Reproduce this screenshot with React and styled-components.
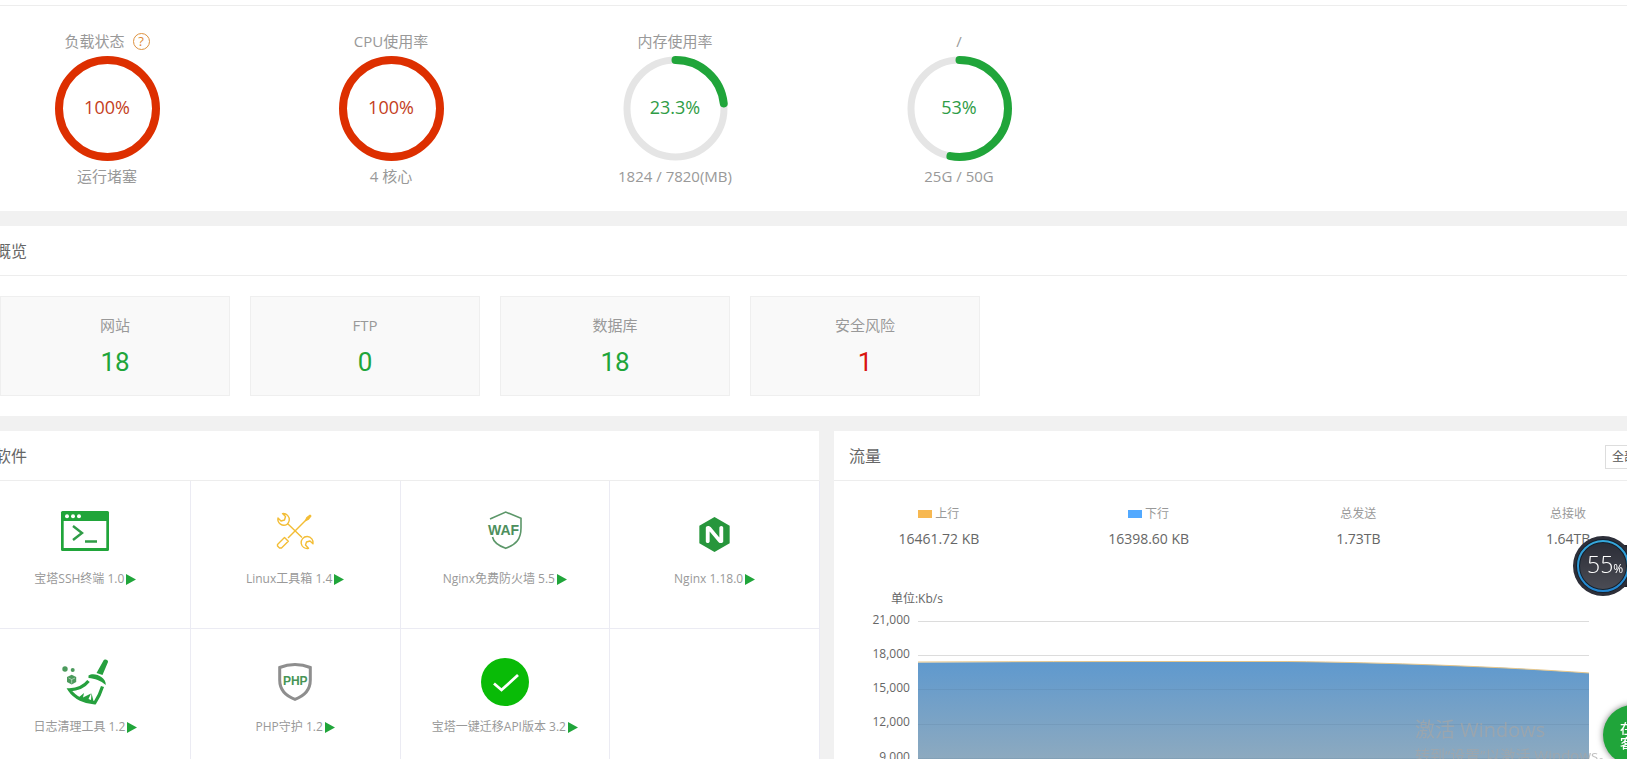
import React from 'react';
import styled, { createGlobalStyle, ThemeProvider } from 'styled-components';
import { SiNginx } from 'react-icons/si';

const theme = {
  green: '#20a53a',
  red: '#dd2f00',
  danger: '#d9150f',
  muted: '#999',
  text: '#666',
  line: '#ededed',
  page: '#f1f1f1',
  gap: '15px',
};

const GlobalStyle = createGlobalStyle`
  * {
    box-sizing: border-box;
  }
  body {
    margin: 0;
    background: ${theme.page};
    color: ${theme.text};
    font-family: "Open Sans", "Noto Sans CJK SC", sans-serif;
    font-size: 12px;
  }
  a {
    color: inherit;
    text-decoration: none;
  }
`;

const Viewport = styled.div`
  height: 100vh;
  overflow: hidden;
`;

// the dashboard is wider than the window and scrolled a little to the right
const Page = styled.main`
  display: flex;
  flex-direction: column;
  gap: ${props => props.theme.gap};
  width: calc(100% + 66px);
  margin-left: -20px;
`;

const Panel = styled.section`
  min-width: 0;
  background: #fff;
`;

const PanelHeader = styled.header`
  display: flex;
  align-items: center;
  justify-content: space-between;
  height: 50px;
  padding: 0 15px;
  border-bottom: 1px solid ${props => props.theme.line};
`;

const Title = styled.h2`
  margin: 0;
  font-size: 16px;
  font-weight: 400;
  line-height: 24px;
`;

const TopEdge = styled.div`
  height: 6px;
  border-bottom: 1px solid ${props => props.theme.line};
`;

const GaugeList = styled.ul`
  display: grid;
  grid-template-columns: repeat(4, 284px);
  margin: 0 0 0 -15px;
  padding: 20px 0;
  list-style: none;
`;

const GaugeItem = styled.li`
  display: flex;
  flex-direction: column;
  align-items: center;
  color: ${props => props.theme.muted};
  font-size: 15px;
  line-height: 30px;
`;

const GaugeLabel = styled.div`
  display: flex;
  align-items: center;
  gap: 8px;
  height: 30px;
`;

const Dial = styled.div`
  display: grid;
  place-items: center;
  height: 105px;
  > * {
    grid-area: 1 / 1;
  }
`;

const DialValue = styled.span`
  color: ${props => props.color};
  font-size: 18px;
  line-height: 24px;
  padding-bottom: 4px;
`;

const HelpButton = styled.button`
  width: 17px;
  height: 17px;
  padding: 0;
  border: 1px solid #dd9240;
  border-radius: 50%;
  background: none;
  color: #dd8a35;
  font: 13px/15px "Open Sans", sans-serif;
`;

const CardList = styled.div`
  display: flex;
  gap: 20px;
  padding: 20px;
`;

const Card = styled.a`
  display: block;
  width: 230px;
  height: 100px;
  padding: 13px 0;
  border: 1px solid #efefef;
  background: #f9f9f9;
  text-align: center;
`;

const CardLabel = styled.div`
  color: ${props => props.theme.muted};
  font-size: 15px;
  line-height: 30px;
`;

const CardValue = styled.div`
  color: ${props => (props.$danger ? props.theme.danger : props.theme.green)};
  font-family: Roboto, sans-serif;
  font-size: 26px;
  line-height: 44px;
`;

const Columns = styled.div`
  display: grid;
  grid-template-columns: 1fr 1fr;
  gap: ${props => props.theme.gap};
`;

const AppGrid = styled.div`
  display: grid;
  grid-template-columns: repeat(4, 1fr);
  margin-right: -1px;
  padding-left: 1px;
`;

const AppCell = styled.a`
  display: flex;
  flex-direction: column;
  align-items: center;
  height: 148px;
  padding-top: 29px;
  border-right: 1px solid #ebebf3;
  border-bottom: 1px solid #ebebf3;
  color: ${props => props.theme.muted};
`;

const AppIcon = styled.svg`
  width: 48px;
  height: 48px;
  overflow: visible;
`;

const AppIconBox = styled.div`
  display: grid;
  place-items: center;
  height: 48px;
`;

const AppName = styled.span`
  display: flex;
  align-items: center;
  gap: 2px;
  line-height: 20px;
  margin-top: 11px;
`;

const Filter = styled.select`
  appearance: none;
  width: 53px;
  height: 24px;
  margin-top: 2px;
  padding: 0 6px;
  border: 1px solid #ddd;
  border-radius: 0;
  background: #fff;
  color: #555;
  font: inherit;
`;

const Stats = styled.dl`
  display: grid;
  grid-template-columns: repeat(4, 1fr);
  margin: 0;
  padding-top: 20px;
  text-align: center;
  line-height: 25px;
`;

const StatLabel = styled.dt`
  display: flex;
  align-items: center;
  justify-content: center;
  gap: 3px;
  color: ${props => props.theme.muted};
`;

const StatValue = styled.dd`
  margin: 0;
  font-size: 14px;
`;

const Swatch = styled.i`
  width: 14px;
  height: 8px;
  background: ${props => props.color};
`;

const ChartUnit = styled.div`
  margin: 38px 0 1px calc(10% - 27px);
  line-height: 20px;
`;

const Chart = styled.div`
  display: grid;
  grid-template-columns: 10% 1fr 10%;
`;

const Axis = styled.div`
  display: flex;
  flex-direction: column;
  justify-content: space-between;
  height: 259px;
  padding-right: 8px;
  line-height: 20px;
  text-align: right;
`;

const Plot = styled.svg`
  display: block;
  width: 100%;
  height: 240px;
  margin-top: 11px;
`;

const MemoryBall = styled.div`
  position: fixed;
  top: 536px;
  right: -6px;
  width: 60px;
  height: 60px;
`;

const BallText = styled.div`
  position: absolute;
  top: 12px;
  left: 14px;
  color: #fff;
  font: 300 23px/32px "Open Sans", sans-serif;
  white-space: nowrap;
  small {
    font-size: 12px;
    font-weight: 400;
  }
`;

const Support = styled.button`
  position: fixed;
  top: 705px;
  right: -36px;
  width: 60px;
  height: 60px;
  padding: 0 17px;
  border: 0;
  border-radius: 50%;
  background: ${props => props.theme.green};
  box-shadow: 0 0 6px rgba(0, 0, 0, .5);
  color: #fff;
  font: 500 13px/15px "Noto Sans CJK SC", sans-serif;
`;

const Watermark = styled.div`
  position: fixed;
  top: 715px;
  left: calc(100% - 212px);
  color: rgba(165, 165, 165, .7);
  font-size: 15px;
  line-height: 20px;
  white-space: nowrap;
  pointer-events: none;
  strong {
    display: block;
    font-size: 20px;
    font-weight: 400;
    line-height: 30px;
  }
`;

const gauges = [
  { label: '负载状态', value: 100, note: '运行堵塞', help: true },
  { label: 'CPU使用率', value: 100, note: '4 核心' },
  { label: '内存使用率', value: 23.3, note: '1824 / 7820(MB)' },
  { label: '/', value: 53, note: '25G / 50G' },
];

const cards = [
  { label: '网站', value: 18 },
  { label: 'FTP', value: 0 },
  { label: '数据库', value: 18 },
  { label: '安全风险', value: 1, danger: true },
];

const stats = [
  { label: '上行', value: '16461.72 KB', color: '#f7b851' },
  { label: '下行', value: '16398.60 KB', color: '#52a9ff' },
  { label: '总发送', value: '1.73TB' },
  { label: '总接收', value: '1.64TB' },
];

const ticks = ['21,000', '18,000', '15,000', '12,000', '9,000', '6,000', '3,000', '0'];

const Gauge = ({ label, value, note, help }) => {
  const full = value >= 100;
  const color = full ? theme.red : theme.green;
  return (
    <GaugeItem>
      <GaugeLabel>
        {label}
        {help && <HelpButton type="button">?</HelpButton>}
      </GaugeLabel>
      <Dial>
        <svg width="105" height="105" fill="none">
          <circle cx="52.5" cy="52.5" r="48.5" stroke="#e5e5e5" strokeWidth="7" />
          <circle
            cx="52.5"
            cy="52.5"
            r="48.5"
            stroke={color}
            strokeWidth="8"
            strokeLinecap={full ? 'butt' : 'round'}
            pathLength="100"
            strokeDasharray={full ? 'none' : `${value} 100`}
            transform="rotate(-90 52.5 52.5)"
          />
        </svg>
        <DialValue color={full ? '#c43e1c' : '#2f9c46'}>{value}%</DialValue>
      </Dial>
      {note}
    </GaugeItem>
  );
};

const TerminalIcon = () => (
  <AppIcon viewBox="0 0 48 48">
    <rect y="1" width="48" height="40" rx="1.5" fill="#20a53a" />
    <path d="M2.7 11H45.3V38H2.7Z" fill="#fff" />
    <g fill="#fff">
      <circle cx="6" cy="6.3" r="2" />
      <circle cx="12" cy="6.3" r="2" />
      <circle cx="18" cy="6.3" r="2" />
    </g>
    <path d="M12 16L21 23L12 30M24 31.5H36" fill="none" stroke="#2f9c46" strokeWidth="2.4" />
  </AppIcon>
);

const ToolsIcon = () => (
  <AppIcon viewBox="0 0 48 48" fill="none" stroke="#f3bd35" strokeWidth="1.4" strokeLinejoin="round">
    <path d="M17 14L31 27.500M18.200 10.500A6 6 0 0 0 11.500 3.600L14.500 6.500L13.500 10L10 11L7 8A6 6 0 0 0 16 14.300A6 6 0 0 0 18.200 10.500Z" />
    <path d="M30.200 33.500A6 6 0 0 0 37.500 38.300L34.500 35L35.500 32L39 31L42 33.800A6 6 0 1 0 30.200 33.500Z" />
    <path d="M17 28L35 10" />
    <path d="M34.500 10.500L36 7.500L39 5.200L39.800 6L37.500 9L34.500 10.500Z" fill="#f3bd35" />
    <path d="M13.500 27.500L17.300 31.300L10.500 38H8.500L6.500 36V34.500Z" />
  </AppIcon>
);

const WafIcon = () => (
  <AppIcon viewBox="0 0 48 48">
    <path d="M9 9L24.700 2L40 8.300V18C40 29 35.500 34 24.700 38.300C17 35.500 12.500 32 11.500 27" fill="none" stroke="#5c9769" strokeWidth="1.6" />
    <text x="22.500" y="25" textAnchor="middle" fontFamily="Liberation Sans, sans-serif" fontWeight="700" fontSize="14" fill="#4d8f5d">WAF</text>
  </AppIcon>
);

const BroomIcon = () => (
  <AppIcon viewBox="0 0 48 48">
    <g fill="#4b9a5c">
      <circle cx="4" cy="11" r="2.700" />
      <circle cx="11.700" cy="12" r="2" />
      <path d="M10.700 16.800L15.200 19V24L10.700 26.500L6 24V19Z" />
    </g>
    <path d="M7.500 20L10.700 21.500L14 20M10.700 21.500V25.500" fill="none" stroke="#fff" strokeWidth=".5" />
    <g fill="#26a03e">
      <path d="M42.500 2.500C43.500 .5 47.500 1.500 47 4L41.500 17L35.500 15Z" />
      <path d="M27.500 17.500C33 14 45 18.500 44.800 27C39.500 22.500 34 20.500 27.500 20Z" />
      <path d="M17 40L23 35L22 39.500L30 35.500L27.500 41L30 42L30.500 35L33 45L24 43Z" />
    </g>
    <path d="M27.500 23C22 30 15 31.500 8.500 31.800C14 40 24 44.500 33.800 44.800C37 40 39.500 35 41.500 28.500" fill="none" stroke="#26a03e" strokeWidth="3.200" />
  </AppIcon>
);

const PhpIcon = () => (
  <AppIcon viewBox="0 0 48 48">
    <path d="M24 6.500C29 6.500 34.500 7.500 39.300 9.500V22C39.300 32 33 38 24 41.300C15 38 8.700 32 8.700 22V9.500C13.500 7.500 19 6.500 24 6.500Z" fill="none" stroke="#8e8e8e" strokeWidth="3" />
    <text x="24.300" y="26.500" textAnchor="middle" fontFamily="Liberation Sans, sans-serif" fontWeight="700" fontSize="12" fill="#479556">PHP</text>
  </AppIcon>
);

const CheckIcon = () => (
  <AppIcon viewBox="0 0 48 48">
    <circle cx="24" cy="24" r="24" fill="#09bb07" />
    <path d="M13 25.500L20.500 32L37 17" fill="none" stroke="#fff" strokeWidth="2.800" />
  </AppIcon>
);

const apps = [
  { name: '宝塔SSH终端 1.0', icon: <TerminalIcon /> },
  { name: 'Linux工具箱 1.4', icon: <ToolsIcon /> },
  { name: 'Nginx免费防火墙 5.5', icon: <WafIcon /> },
  { name: 'Nginx 1.18.0', icon: <SiNginx size={35} color="#27963c" /> },
  { name: '日志清理工具 1.2', icon: <BroomIcon /> },
  { name: 'PHP守护 1.2', icon: <PhpIcon /> },
  { name: '宝塔一键迁移API版本 3.2', icon: <CheckIcon /> },
];

const TrafficPlot = () => (
  <Plot viewBox="0 0 672 240" preserveAspectRatio="none">
    <defs>
      <linearGradient id="area" x1="0" y1="41" x2="0" y2="240" gradientUnits="userSpaceOnUse">
        <stop offset="0" stopColor="#5f99ce" />
        <stop offset=".5" stopColor="#8eaabf" />
        <stop offset="1" stopColor="#bdbbb0" />
      </linearGradient>
    </defs>
    <g stroke="#dcdcdc">
      <path d="M0 .5H672M0 34.5H672" />
    </g>
    <path d="M0 41.500C120 40.500 240 40.500 370 40.500C470 41.500 580 45.500 672 52V240H0Z" fill="url(#area)" />
    <path d="M0 41C120 40.500 240 40.500 370 40.500C470 41.500 580 45.500 672 52" fill="none" stroke="#e6c68a" />
    <g stroke="rgba(60, 90, 120, .12)">
      <path d="M0 68.500H672M0 103.500H672M0 137.500H672M0 171.500H672M0 205.500H672" />
    </g>
  </Plot>
);

const App = () => (
  <ThemeProvider theme={theme}>
    <GlobalStyle />
    <Viewport>
      <Page>
        <Panel>
          <TopEdge />
          <GaugeList>
            {gauges.map(gauge => <Gauge key={gauge.label} {...gauge} />)}
          </GaugeList>
        </Panel>

        <Panel>
          <PanelHeader><Title>概览</Title></PanelHeader>
          <CardList>
            {cards.map(({ label, value, danger }) => (
              <Card key={label} href="#">
                <CardLabel>{label}</CardLabel>
                <CardValue $danger={danger}>{value}</CardValue>
              </Card>
            ))}
          </CardList>
        </Panel>

        <Columns>
          <Panel>
            <PanelHeader><Title>软件</Title></PanelHeader>
            <AppGrid>
              {apps.map(({ name, icon }) => (
                <AppCell key={name} href="#">
                  <AppIconBox>{icon}</AppIconBox>
                  <AppName>
                    {name}
                    <svg width="10" height="11"><path d="M0 0L10 5.500L0 11Z" fill="#20a53a" /></svg>
                  </AppName>
                </AppCell>
              ))}
              <AppCell as="div" />
            </AppGrid>
          </Panel>

          <Panel>
            <PanelHeader>
              <Title>流量</Title>
              <Filter aria-label="流量">
                <option>全部</option>
              </Filter>
            </PanelHeader>
            <Stats>
              {stats.map(({ label, value, color }) => (
                <div key={label}>
                  <StatLabel>{color && <Swatch color={color} />}{label}</StatLabel>
                  <StatValue>{value}</StatValue>
                </div>
              ))}
            </Stats>
            <ChartUnit>单位:Kb/s</ChartUnit>
            <Chart>
              <Axis>
                {ticks.map(tick => <span key={tick}>{tick}</span>)}
              </Axis>
              <TrafficPlot />
            </Chart>
          </Panel>
        </Columns>
      </Page>

      <Watermark>
        <strong>激活 Windows</strong>
        转到“设置”以激活 Windows。
      </Watermark>
      <MemoryBall>
        <svg width="60" height="60">
          <defs>
            <linearGradient id="ball" x1="0" y1="0" x2="0" y2="1">
              <stop offset="0" stopColor="#2a2c36" />
              <stop offset="1" stopColor="#4c4d55" />
            </linearGradient>
            <linearGradient id="ring" x1="0" y1="0" x2="0" y2="1">
              <stop offset="0" stopColor="#35a8dc" />
              <stop offset="1" stopColor="#2385cf" />
            </linearGradient>
          </defs>
          <path d="M50 9H60V51H50Z" fill="#23242c" />
          <circle cx="30" cy="30" r="30" fill="#2d2f39" />
          <circle cx="30" cy="30" r="25" fill="url(#ball)" stroke="#15202c" strokeWidth="4" />
          <circle cx="30" cy="30" r="25" fill="none" stroke="url(#ring)" strokeWidth="2" />
        </svg>
        <BallText>55<small>%</small></BallText>
      </MemoryBall>
      <Support type="button">在线客服</Support>
    </Viewport>
  </ThemeProvider>
);

export default App;
